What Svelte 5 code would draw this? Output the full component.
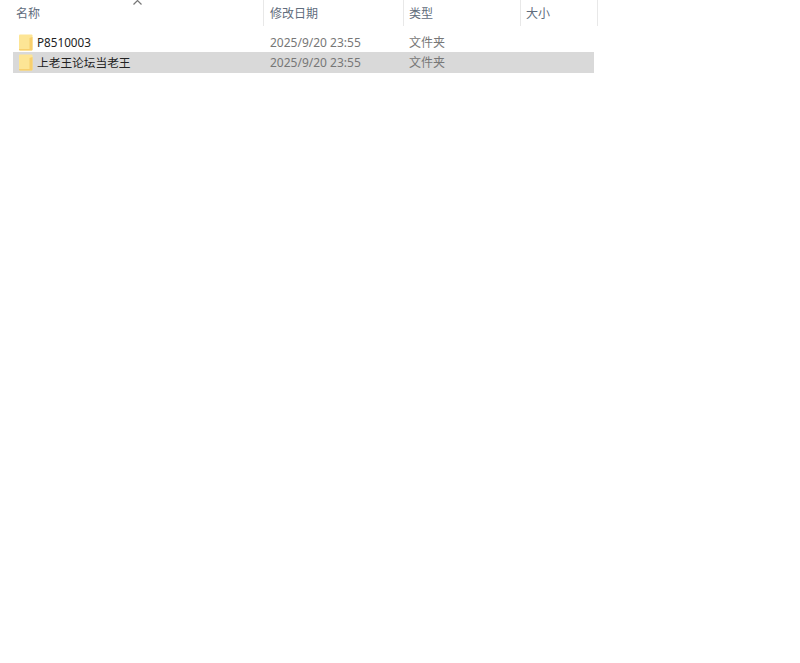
<script lang="ts">
  const columns = ['名称', '修改日期', '类型', '大小'];
  const rows = [
    { name: 'P8510003', date: '2025/9/20 23:55', type: '文件夹', selected: false },
    { name: '上老王论坛当老王', date: '2025/9/20 23:55', type: '文件夹', selected: true }
  ];
</script>

<div class="explorer">
  <div class="header">
    {#each columns as col, i}
      <div class="col">
        {#if i === 0}
          <svg class="sort" width="9" height="5" viewBox="0 0 9 5"><path d="M0.5 4.5 L4.5 0.5 L8.5 4.5" fill="none" stroke="#777" stroke-width="1.2" /></svg>
        {/if}
        {col}
      </div>
    {/each}
  </div>

  <div class="list">
    {#each rows as row}
      <div class="row" class:selected={row.selected}>
        <div class="name">
          <svg class="folder" width="14" height="17" viewBox="0 0 14 17">
            <path d="M0 1.5 Q0 0.5 1 0.5 L12.5 0.5 Q13.5 0.5 13.5 1.5 L13.5 15.5 Q13.5 16.5 12.5 16.5 L1 16.5 Q0 16.5 0 15.5 Z" fill="#fde595" />
            <path d="M10.5 4 L13.5 3 L13.5 15.5 Q13.5 16.5 12.5 16.5 L1 16.5 Q0 16.5 0 15.5 L0 15 L10.5 15 Z" fill="#f8cf6c" />
          </svg>
          <span>{row.name}</span>
        </div>
        <div class="date">{row.date}</div>
        <div class="type">{row.type}</div>
      </div>
    {/each}
  </div>
</div>

<style>
  :global(body) {
    margin: 0;
    background: #fff;
  }
  .explorer {
    width: 800px;
    height: 663px;
    font-family: "Noto Sans", "Noto Sans CJK SC", sans-serif;
    font-size: 12px;
    overflow: hidden;
  }
  .header {
    display: grid;
    grid-template-columns: 264px 140px 117px 77px;
    height: 26px;
    width: 598px;
    color: #5f6c7c;
  }
  .col {
    position: relative;
    border-right: 1px solid #e8e8e8;
    padding-left: 6px;
    padding-top: 1px;
    line-height: 26px;
    height: 25px;
  }
  .col:first-child {
    padding-left: 16px;
  }
  .col:nth-child(3),
  .col:nth-child(4) {
    padding-left: 5px;
  }
  .sort {
    position: absolute;
    left: 133px;
    top: 0;
  }
  .list {
    margin: 6px 0 0 13px;
    width: 581px;
  }
  .row {
    display: grid;
    grid-template-columns: 251px 139px 1fr;
    height: 20px;
    line-height: 20px;
    align-items: start;
    color: #777;
  }
  .row.selected {
    background: #d9d9d9;
    height: 21px;
  }
  .name {
    display: flex;
    align-items: center;
    gap: 4px;
    height: 20px;
    padding-left: 6px;
    color: #222;
    font-size: 11.7px;
  }
  .folder {
    flex: none;
  }
  .date,
  .type {
    padding: 1px 0 0 6px;
  }
</style>
